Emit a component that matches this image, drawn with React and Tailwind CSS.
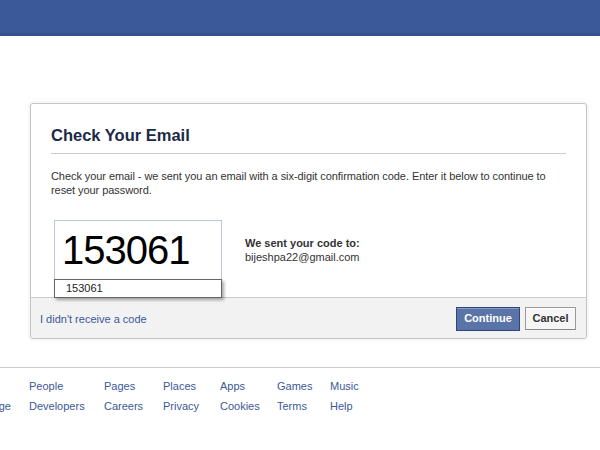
const footerCols = [
  ['Badges', 'Create a Page', 'w-[89px]'],
  ['People', 'Developers', 'w-[75px]'],
  ['Pages', 'Careers', 'w-[59px]'],
  ['Places', 'Privacy', 'w-[57px]'],
  ['Apps', 'Cookies', 'w-[57px]'],
  ['Games', 'Terms', 'w-[53px]'],
  ['Music', 'Help', 'w-[60px]'],
];

export default function App() {
  return (
    <div className="w-[600px] h-[450px] overflow-hidden bg-white font-['Liberation_Sans',Arial,sans-serif] text-[11px] text-[#333]">
      {/* top bar */}
      <div className="h-[36px] bg-[#3b5998] border-b-[3px] border-[#35528f]"></div>

      <div className="pt-[67px] pl-[30px]">
        <div className="w-[557px] rounded-[3px] border border-[#c4c4c4] shadow-[0_0_0_2px_rgba(0,0,0,0.03)] bg-white">
          <div className="px-[20px] pt-[21px]">
            <h2 className="text-[16.5px] leading-[20px] font-bold text-[#1c2a47]">Check Your Email</h2>
            <div className="mt-[8px] border-b border-[#ccc]"></div>
            <p className="mt-[15px] leading-[14px] tracking-[-0.07px]">
              Check your email - we sent you an email with a six-digit confirmation code. Enter it below to continue to reset your password.
            </p>
            <div className="mt-[23px] ml-[3px] flex items-start gap-[23px]">
              <div className="w-[168px] relative z-10">
                <div className="h-[59px] border border-[#bdc7d8] border-b-0 bg-white flex items-center pl-[7px]">
                  <span className="text-[40px] leading-none text-black tracking-[-1px]">153061</span>
                </div>
                <div className="h-[19px] border border-[#666] bg-white shadow-[2px_2px_3px_rgba(0,0,0,0.35)] pl-[11px] leading-[17px] text-[#222]">
                  153061
                </div>
              </div>
              <div className="pt-[16px] leading-[14px]">
                <div className="font-bold text-[#333]">We sent your code to:</div>
                <div>bijeshpa22@gmail.com</div>
              </div>
            </div>
          </div>
          <div className="-mt-[1px] h-[41px] bg-[#f2f2f2] border-t border-[#ccc] rounded-b-[3px] flex items-center justify-between pl-[9px] pr-[10px]">
            <a className="text-[#3b5998] mt-[3px]">I didn't receive a code</a>
            <div className="flex items-center gap-[5px] mt-[1px]">
              <button className="h-[24px] px-[5px] w-[64px] bg-[#5b74a8] border border-[#29447e] text-white font-bold text-[11px] shadow-[inset_0_1px_0_#8a9cc2]">
                Continue
              </button>
              <button className="h-[23px] w-[51px] bg-[#f6f6f6] border border-[#999] border-b-[#888] text-[#333] font-bold text-[11px] shadow-[inset_0_1px_0_#fff]">
                Cancel
              </button>
            </div>
          </div>
        </div>
      </div>

      {/* footer links */}
      <div className="mt-[28px] border-t border-[#ccc] pt-[8px]">
        <div className="flex ml-[-60px]">
          {footerCols.map(([a, b, w]) => (
            <div key={a} className={`${w} shrink-0 leading-[20px] text-[#3b5998] whitespace-nowrap`}>
              <div>{a}</div>
              <div>{b}</div>
            </div>
          ))}
        </div>
      </div>
    </div>
  );
}
